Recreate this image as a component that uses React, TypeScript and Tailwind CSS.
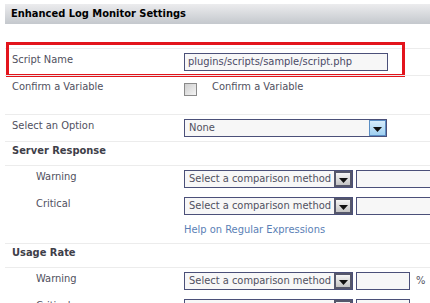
import type { ReactNode } from 'react';

const font = "font-['Tahoma','DejaVu_Sans_Condensed','DejaVu_Sans',sans-serif]";

function Arrow() {
  return (
    <svg width="9" height="5" viewBox="0 0 9 5" className="block">
      <path d="M0 0h9L4.5 5z" fill="#111" />
    </svg>
  );
}

function DropButton({ blue }: { blue?: boolean }) {
  return blue ? (
    <div className="w-[17px] h-full border border-[#5b8ec4] bg-gradient-to-b from-[#d6ecfb] to-[#9fd0f1] flex items-center justify-center pt-[2px]">
      <Arrow />
    </div>
  ) : (
    <div className="w-[18px] h-full border-2 border-[#55576b] bg-gradient-to-b from-[#f5f5f5] to-[#c4c4c4] flex items-center justify-center pt-[3px]">
      <Arrow />
    </div>
  );
}

function Select({ text, width, blue }: { text: string; width: string; blue?: boolean }) {
  return (
    <div className={`${width} h-[18px] border border-[#4b5079] bg-[#f7f7f7] flex items-stretch`}>
      <div className="flex-1 pl-[4px] leading-[16px] text-[#505060] whitespace-nowrap overflow-hidden">{text}</div>
      <DropButton blue={blue} />
    </div>
  );
}

function TextBox({ width }: { width: string }) {
  return <div className={`${width} h-[18px] border border-[#4b5079] bg-[#f7f7f7] shrink-0`} />;
}

function Row({
  label,
  children,
  indent,
  bold,
  border,
  className = '',
}: {
  label?: string;
  children?: ReactNode;
  indent?: boolean;
  bold?: boolean;
  border?: boolean;
  className?: string;
}) {
  return (
    <div className={`relative flex items-start ${border ? 'border-t border-[#ececec]' : ''} ${className}`}>
      <div
        className={`w-[179px] shrink-0 leading-[13px] ${indent ? 'pl-[31px]' : 'pl-[7px]'} ${
          bold ? 'font-bold text-[#3e3e48]' : 'text-[#50505e]'
        }`}
      >
        {label}
      </div>
      <div className="flex items-center gap-[3px]">{children}</div>
    </div>
  );
}

export default function App() {
  return (
    <div className={`w-[430px] h-[303px] overflow-hidden bg-white text-[11px] ${font}`}>
      <div className="pt-[4px] pl-[5px]">
        {/* Header */}
        <div className="h-[20px] bg-gradient-to-b from-[#ececee] to-[#c4c8cd] pl-[6px] flex items-center font-bold text-[11px] text-black">
          Enhanced Log Monitor Settings
        </div>

        <div className="h-[24px]" />

        {/* Script name, highlighted */}
        <Row label="Script Name" border className="h-[27px] pt-[4px]">
          <div className="w-[204px] h-[18px] border border-[#4b5079] bg-[#f7f7f7] pl-[3px] leading-[16px] text-[#4a4a66]">
            plugins/scripts/sample/script.php
          </div>
          <div className="absolute left-[1px] top-[-7px] w-[399px] h-[35px] border-[3px] border-[#e3141c] pointer-events-none" />
        </Row>

        <Row label="Confirm a Variable" border className="h-[39px] pt-[4px]">
          <div className="flex items-start">
            <div className="mt-[3px] w-[13px] h-[13px] border border-[#8a8a8a] bg-gradient-to-br from-[#cfcfcf] to-[#f4f4f4]" />
            <span className="ml-[15px] leading-[13px] text-[#50505e]">Confirm a Variable</span>
          </div>
        </Row>

        <Row label="Select an Option" border className="h-[27px] pt-[4px]">
          <Select text="None" width="w-[203px]" blue />
        </Row>

        <Row label="Server Response" bold border className="h-[24px] pt-[2px]" />

        <Row label="Warning" indent border className="h-[28px] pt-[4px]">
          <Select text="Select a comparison method" width="w-[169px]" />
          <TextBox width="w-[110px]" />
        </Row>
        <Row label="Critical" indent className="h-[27px] pt-[4px]">
          <Select text="Select a comparison method" width="w-[169px]" />
          <TextBox width="w-[110px]" />
        </Row>
        <Row className="h-[23px] pt-[3px]">
          <span className="leading-[13px] text-[#5b7fb6]">Help on Regular Expressions</span>
        </Row>

        <Row label="Usage Rate" bold border className="h-[24px] pt-[2px]" />

        <Row label="Warning" indent border className="h-[28px] pt-[4px]">
          <Select text="Select a comparison method" width="w-[169px]" />
          <TextBox width="w-[54px]" />
          <span className="ml-[3px] text-[#50505e]">%</span>
        </Row>
        <Row label="Critical" indent className="h-[27px] pt-[4px]">
          <Select text="Select a comparison method" width="w-[169px]" />
          <TextBox width="w-[54px]" />
          <span className="ml-[3px] text-[#50505e]">%</span>
        </Row>
      </div>
    </div>
  );
}
